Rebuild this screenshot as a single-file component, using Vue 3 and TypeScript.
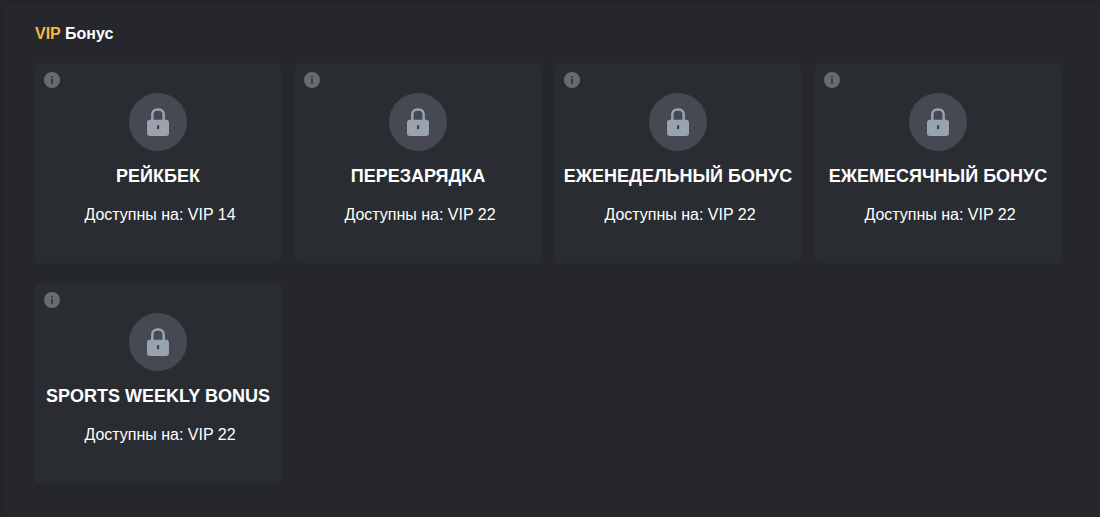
<script setup lang="ts">
interface Bonus {
  title: string
  level: number
}

const bonuses: Bonus[] = [
  { title: 'РЕЙКБЕК', level: 14 },
  { title: 'ПЕРЕЗАРЯДКА', level: 22 },
  { title: 'ЕЖЕНЕДЕЛЬНЫЙ БОНУС', level: 22 },
  { title: 'ЕЖЕМЕСЯЧНЫЙ БОНУС', level: 22 },
  { title: 'SPORTS WEEKLY BONUS', level: 22 },
]
</script>

<template>
  <main class="page">
    <h2 class="heading"><span class="accent">VIP</span> Бонус</h2>
    <ul class="grid">
      <li v-for="bonus in bonuses" :key="bonus.title" class="card">
        <button class="info" type="button" :aria-label="bonus.title">
          <svg viewBox="0 0 16 16" width="16" height="16" aria-hidden="true">
            <circle cx="8" cy="8" r="8" fill="#696b6e" />
            <circle cx="8" cy="4.9" r="1" fill="#34373b" />
            <path d="M6.8 7h2.1v4.7H7.1V7.8h-.3z" fill="#34373b" />
          </svg>
        </button>
        <svg class="lock" viewBox="0 0 58 58" width="58" height="58" aria-hidden="true">
          <circle cx="29" cy="29" r="29" fill="#464952" />
          <path d="M23.3 28v-6.2c0-3.2 2.2-5.4 5-5.4h1.4c2.8 0 5 2.2 5 5.4V28" fill="none" stroke="#98a3af" stroke-width="2.5" />
          <rect x="18" y="26.8" width="22" height="16.2" rx="3" fill="#98a3af" />
          <rect x="28" y="32" width="2.2" height="4.2" rx="0.8" fill="#3c4049" />
        </svg>
        <h3 class="title">{{ bonus.title }}</h3>
        <p class="note">Доступны на: VIP {{ bonus.level }}</p>
      </li>
    </ul>
  </main>
</template>

<style>
body {
  margin: 0;
  background: #25272c;
}
</style>

<style scoped>
.page {
  box-sizing: border-box;
  min-height: 100vh;
  padding: 20px 39px 30px 31px;
  border-top: 4px solid #232528;
  border-left: 4px solid #232528;
  color: #fff;
  font-family: "Liberation Sans", Arial, sans-serif;
}

.heading {
  margin: 0 0 19px;
  font-size: 16px;
  line-height: 20px;
  font-weight: 700;
}

.accent {
  color: #f6b740;
}

.grid {
  display: grid;
  grid-template-columns: repeat(auto-fill, minmax(240px, 1fr));
  gap: 20px 14px;
  margin: 0;
  padding: 0;
  list-style: none;
}

.card {
  position: relative;
  box-sizing: border-box;
  display: flex;
  flex-direction: column;
  align-items: center;
  min-height: 200px;
  padding: 30px 0;
  border-radius: 3px;
  background: #292d32;
}

.info {
  position: absolute;
  top: 9px;
  left: 9px;
  display: flex;
  padding: 0;
  border: 0;
  background: none;
  cursor: pointer;
}

.lock {
  display: block;
}

.title {
  margin: 14px 0 0;
  font-size: 18px;
  line-height: 22px;
  font-weight: 700;
  white-space: nowrap;
}

.note {
  margin: 18px 0 0;
  padding-left: 4px;
  font-size: 16px;
  line-height: 20px;
  white-space: nowrap;
}
</style>
